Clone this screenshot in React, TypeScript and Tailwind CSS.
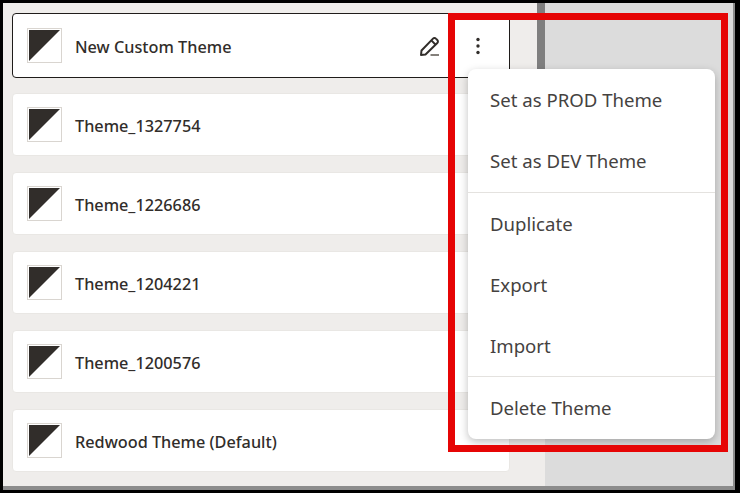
import React from "react";

const themes = ["Theme_1327754", "Theme_1226686", "Theme_1204221", "Theme_1200576", "Redwood Theme (Default)"];

function Thumb() {
  return (
    <svg width="35" height="35" viewBox="0 0 35 35" className="shrink-0">
      <rect x="0.5" y="0.5" width="34" height="34" fill="#fff" stroke="#d9d5d0" />
      <polygon points="2,2 33,2 2,33" fill="#312d2a" />
    </svg>
  );
}

function Pencil() {
  return (
    <svg width="22" height="22" viewBox="0 0 22 22" fill="none" stroke="#312d2a" strokeWidth="2">
      <path d="M2.5 15.5 14 3.6a2 2 0 0 1 2.9 0l1.4 1.4a2 2 0 0 1 0 2.9L6.5 19.5 2 20z" strokeLinejoin="round" />
      <path d="M12.3 5.4l4.4 4.4" />
      <path d="M11.5 20h8.5" stroke="#77726d" strokeWidth="1.8" />
    </svg>
  );
}

function Card({ name, active }: { name: string; active?: boolean }) {
  return (
    <div
      className={
        active
          ? "-mb-px flex h-[65px] items-center rounded-[4px] border border-[#1f1c1a] bg-white pl-[14px] pr-[29px]"
          : "flex h-[63px] items-center rounded-[4px] border border-[#e9e7e4] bg-white pl-[14px] pr-[29px]"
      }
    >
      <Thumb />
      <span className="ml-[13px] pt-[4px] text-[16.25px] font-medium text-[#312d2a]">{name}</span>
      {active && (
        <div className="ml-auto flex items-center gap-[35px]">
          <Pencil />
          <svg width="4" height="18" viewBox="0 0 4 18" fill="#312d2a">
            <circle cx="2" cy="2.5" r="1.7" />
            <circle cx="2" cy="9" r="1.7" />
            <circle cx="2" cy="15.5" r="1.7" />
          </svg>
        </div>
      )}
    </div>
  );
}

function MenuItem({ label, last, top }: { label: string; last?: boolean; top?: boolean }) {
  return (
    <div
      className={
        last
          ? "flex h-[62px] items-center pl-[22px] text-[18.6px] text-[#45423f]"
          : top
            ? "flex h-[61px] items-center pb-[2px] pl-[22px] text-[18.6px] text-[#45423f]"
            : "flex h-[61px] items-center pl-[22px] text-[18.6px] text-[#45423f]"
      }
    >
      {label}
    </div>
  );
}

export default function App() {
  return (
    <div className="relative h-[493px] w-[740px] overflow-hidden bg-black pb-[3px] pl-[3px] pr-[5px] pt-[3px] font-['Noto_Sans',sans-serif]">
      <div className="flex h-full bg-[#8c8c8c] pb-[4px] pr-[2px]">
        <div className="w-[542px] shrink-0 bg-[#efedeb] pl-[9px] pr-[35px] pt-[10px]">
          <div className="flex flex-col gap-[16px]">
            <Card name="New Custom Theme" active />
            {themes.map((t) => (
              <Card key={t} name={t} />
            ))}
          </div>
        </div>
        <div className="flex-1 bg-[#dcdcdc]" />
      </div>

      <div className="absolute left-[537px] top-[3px] h-[200px] w-[8px] bg-[#7f7f7f]" />

      <div className="absolute left-[468px] top-[69px] w-[247px] rounded-[8px] bg-white pt-px shadow-[0_3px_8px_rgba(0,0,0,0.25)]">
        <MenuItem label="Set as PROD Theme" top />
        <MenuItem label="Set as DEV Theme" top />
        <div className="h-px bg-[#e4e2df]" />
        <MenuItem label="Duplicate" />
        <MenuItem label="Export" />
        <MenuItem label="Import" />
        <div className="h-px bg-[#e4e2df]" />
        <MenuItem label="Delete Theme" last />
      </div>

      <div className="pointer-events-none absolute left-[448px] top-[13px] h-[439px] w-[280px] border-[7px] border-[#e60505]" />
    </div>
  );
}
